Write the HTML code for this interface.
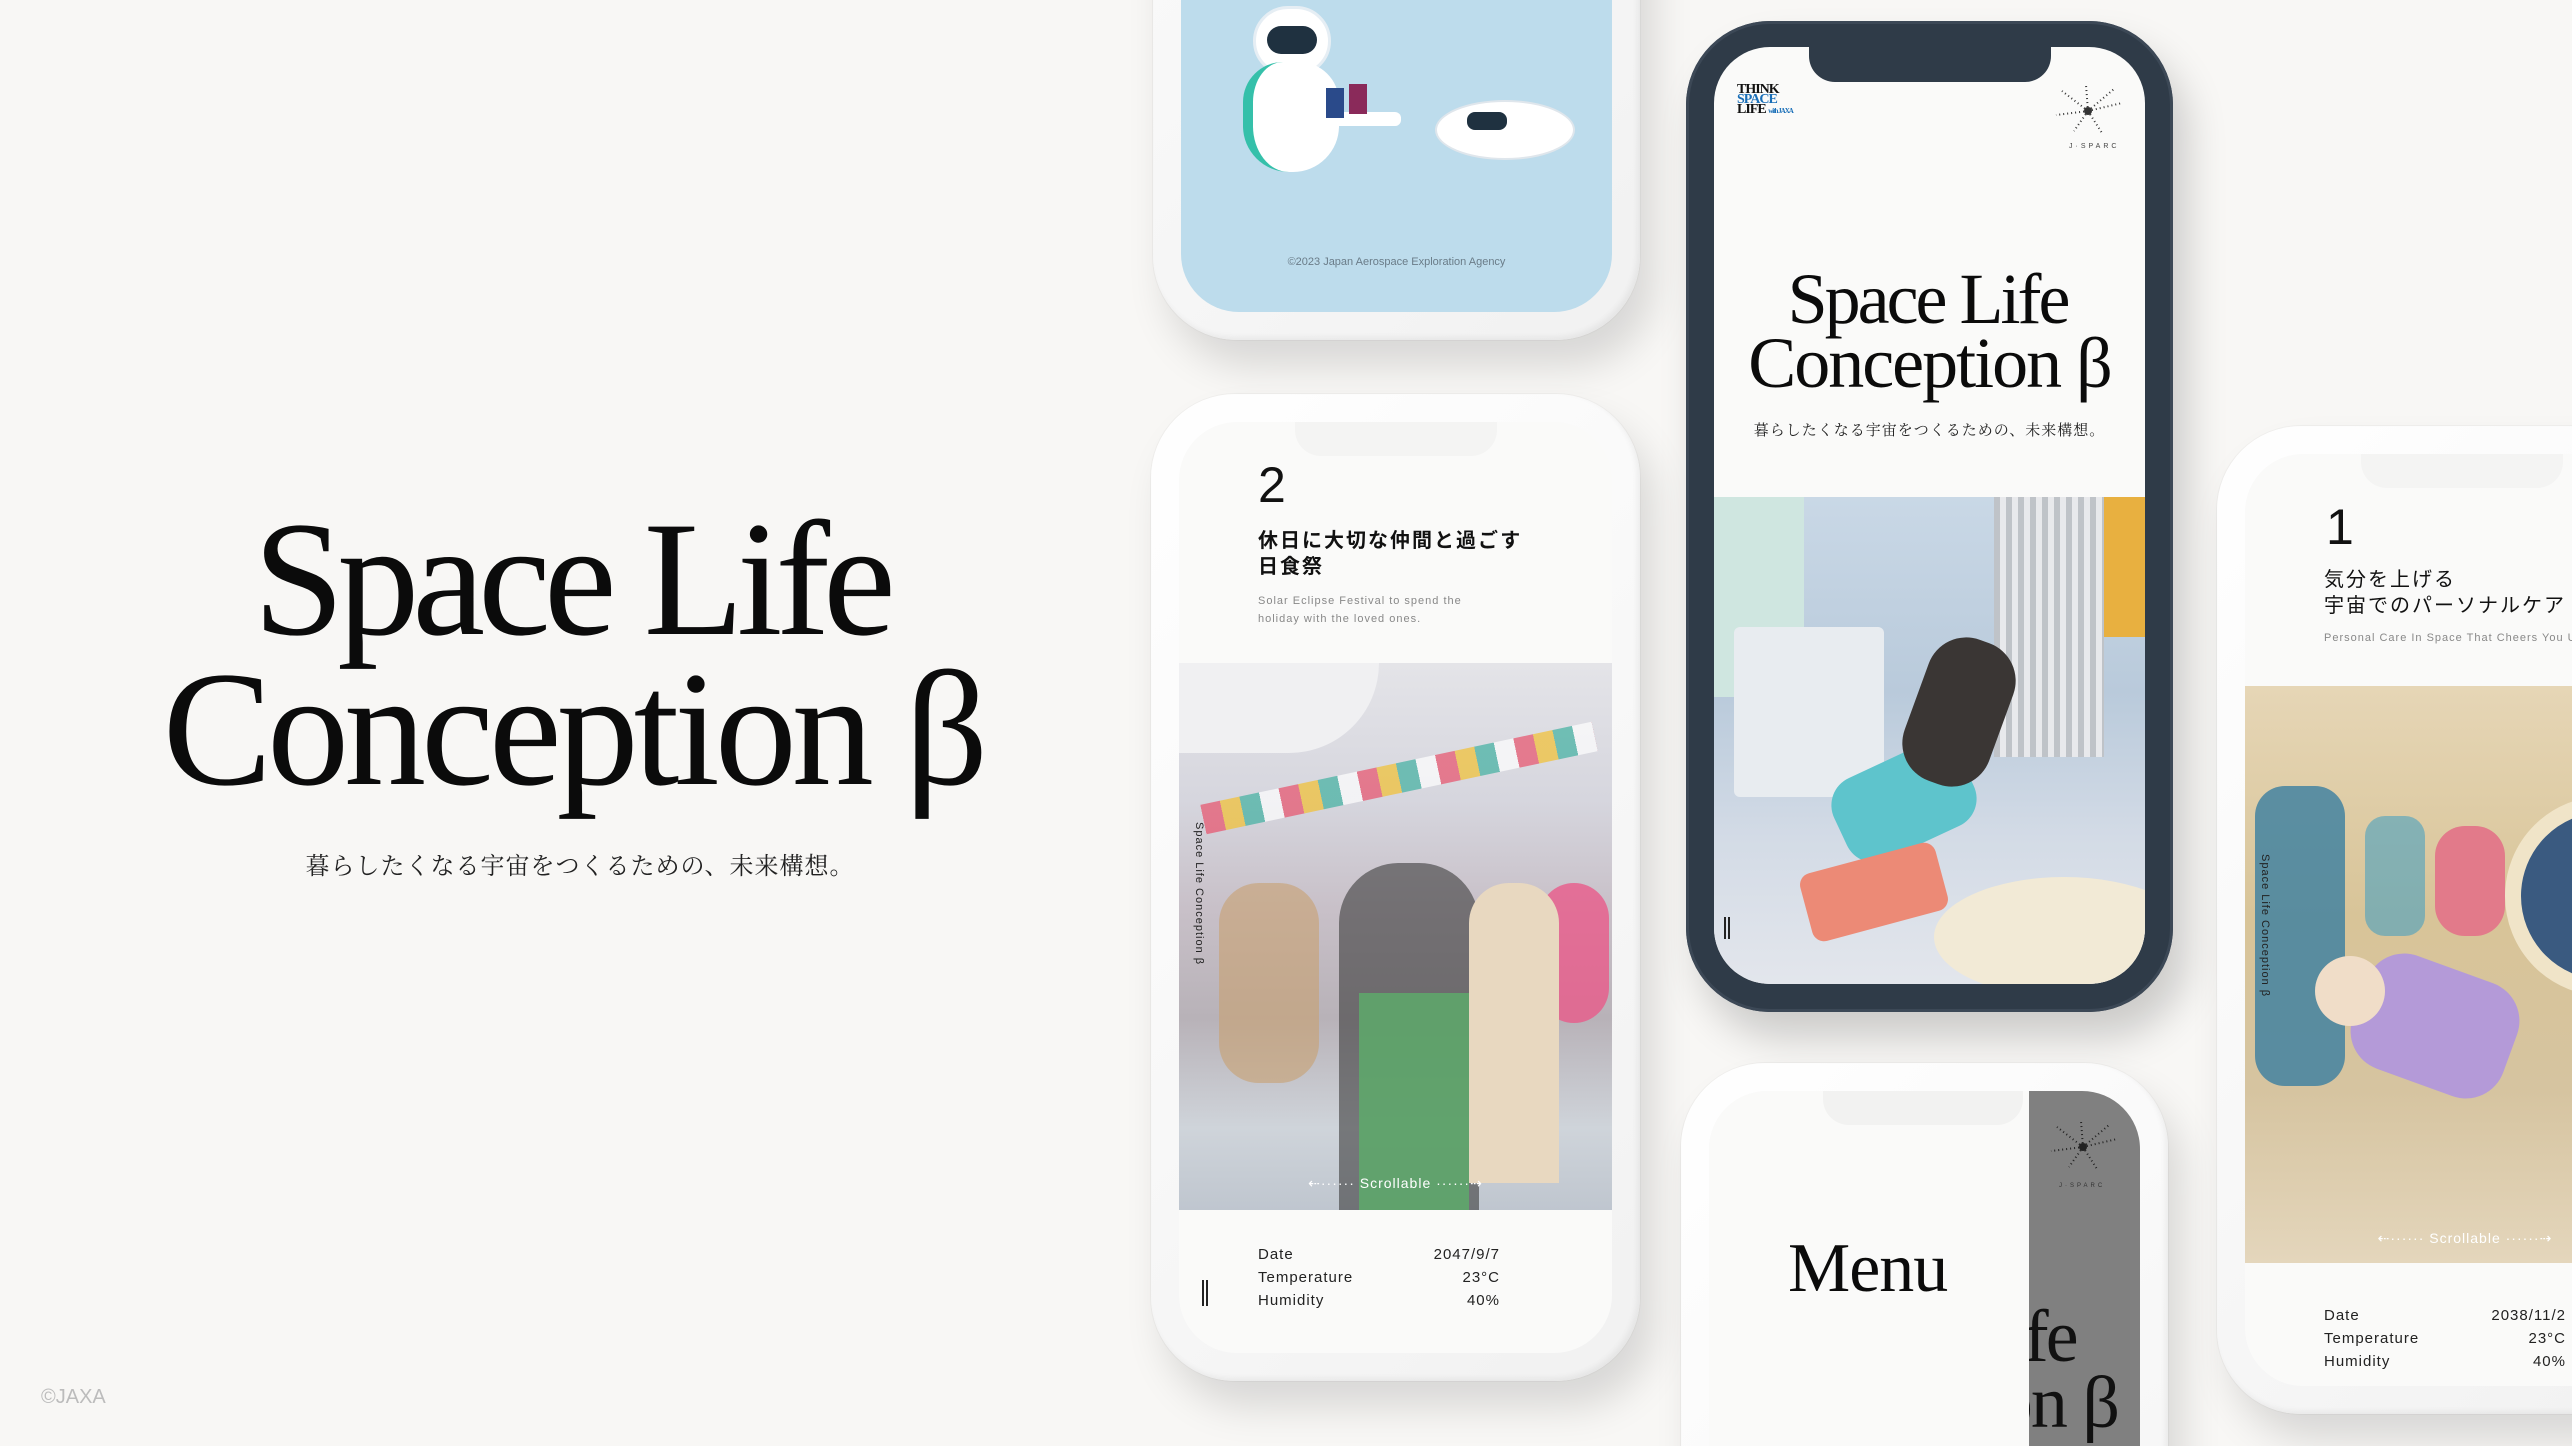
<!DOCTYPE html>
<html><head><meta charset="utf-8">
<style>
*{margin:0;padding:0;box-sizing:border-box}
html,body{width:2572px;height:1446px;overflow:hidden;background:#f8f7f5}
body{position:relative;font-family:"Liberation Sans","Noto Sans CJK JP",sans-serif;color:#111}
#wrap{position:absolute;left:0;top:0;width:2572px;height:1446px;overflow:hidden}
.serif{font-family:"Liberation Serif","Noto Serif CJK SC",serif}
.phone{position:absolute;border-radius:84px;background:linear-gradient(135deg,#ffffff,#f1f1f1);box-shadow:14px 26px 40px rgba(0,0,0,.13),0 0 0 1px rgba(0,0,0,.03),inset -3px -3px 6px rgba(0,0,0,.05)}
.phone.dark{background:#2f3b48;box-shadow:14px 26px 40px rgba(0,0,0,.18),inset 0 0 0 3px #3c4856}
.screen{position:absolute;left:28px;top:28px;right:28px;bottom:28px;border-radius:58px;overflow:hidden;background:#fafaf9}
.notch{position:absolute;top:0;height:34px;border-radius:0 0 26px 26px}
.abs{position:absolute}
.row{position:absolute;left:79px;width:242px;font-size:15px;letter-spacing:1px;color:#222}
.row span{position:absolute}
</style></head><body><div id="wrap">

<!-- left title -->
<div class="abs serif" style="left:25px;top:505px;width:1100px;text-align:center;font-size:164px;line-height:150px;color:#0b0b0b">
<div style="letter-spacing:-7px;margin-left:-8px">Space Life</div>
<div style="letter-spacing:-5px;margin-left:-4px">Conception β</div>
</div>
<div class="abs serif" style="left:0;top:846px;width:1160px;text-align:center;font-size:24px;letter-spacing:1px;color:#222">暮らしたくなる宇宙をつくるための、未来構想。</div>
<div class="abs" style="left:41px;top:1386px;font-size:20px;color:#bcbcbc">©JAXA</div>

<!-- Phone A -->
<div class="phone" style="left:1153px;top:-650px;width:487px;height:990px">
 <div class="screen" style="background:#bddcec">
  <div class="abs" style="left:0;right:0;bottom:0;height:340px">
   <div class="abs" style="left:72px;top:34px;width:78px;height:70px;border-radius:40px;background:#fff;border:3px solid #e6eef4"></div>
   <div class="abs" style="left:86px;top:54px;width:50px;height:28px;border-radius:14px;background:#1f3140"></div>
   <div class="abs" style="left:62px;top:90px;width:96px;height:110px;border-radius:40px 40px 46px 46px;background:#fff;border-left:10px solid #35c0aa"></div>
   <div class="abs" style="left:120px;top:140px;width:100px;height:14px;border-radius:6px;background:#fff"></div>
   <div class="abs" style="left:145px;top:116px;width:18px;height:30px;background:#2a4a8a"></div>
   <div class="abs" style="left:168px;top:112px;width:18px;height:30px;background:#8a2a5a"></div>
   <div class="abs" style="left:254px;top:128px;width:140px;height:60px;border-radius:50%;background:#fff;border:2px solid #dfe6ec"></div>
   <div class="abs" style="left:286px;top:140px;width:40px;height:18px;border-radius:8px;background:#1f3140"></div>
   <div class="abs" style="left:0;right:0;top:284px;text-align:center;font-size:11px;color:#6a7c88">©2023 Japan Aerospace Exploration Agency</div>
  </div>
 </div>
</div>

<!-- Phone B -->
<div class="phone" style="left:1151px;top:394px;width:489px;height:987px">
 <div class="screen">
  <div class="notch" style="left:116px;width:202px;background:#f4f4f3"></div>
  <div class="abs" style="left:79px;top:34px;font-size:50px;font-weight:500">2</div>
  <div class="abs" style="left:79px;top:106px;font-size:20px;line-height:26px;letter-spacing:2px;font-weight:bold">休日に大切な仲間と過ごす<br>日食祭</div>
  <div class="abs" style="left:79px;top:170px;font-size:11px;line-height:18px;letter-spacing:1px;color:#888">Solar Eclipse Festival to spend the<br>holiday with the loved ones.</div>
  <div class="abs" style="left:0;right:0;top:241px;height:547px;background:linear-gradient(180deg,#e4e4e8 0%,#d6d6de 25%,#c8c0c8 45%,#b8b2b8 65%,#cfd4da 85%,#bfc6cf 100%)">
   <div class="abs" style="left:0;top:0;width:200px;height:90px;border-radius:0 0 120px 0;background:#f0f0f2"></div>
   <div class="abs" style="left:20px;top:100px;width:400px;height:30px;background:repeating-linear-gradient(90deg,#e8506a 0 20px,#f2c030 20px 40px,#40b0a0 40px 60px,#fff 60px 80px);opacity:.7;transform:rotate(-12deg)"></div>
   <div class="abs" style="left:360px;top:220px;width:70px;height:140px;border-radius:35px;background:#e85a8a;opacity:.8"></div>
   <div class="abs" style="left:160px;top:200px;width:140px;height:347px;border-radius:60px 60px 0 0;background:#3a3a3a;opacity:.6"></div>
   <div class="abs" style="left:180px;top:330px;width:110px;height:217px;background:#5cae6a;opacity:.8"></div>
   <div class="abs" style="left:290px;top:220px;width:90px;height:300px;border-radius:40px 40px 0 0;background:#e8d8c0"></div>
   <div class="abs" style="left:40px;top:220px;width:100px;height:200px;border-radius:40px;background:#c8a070;opacity:.6"></div>
   <div class="abs" style="left:0;right:0;top:512px;text-align:center;font-size:14px;color:#fff;letter-spacing:1px">⇠······ Scrollable ······⇢</div>
  </div>
  <div class="abs" style="left:26px;top:400px;transform:rotate(90deg);transform-origin:0 0;font-size:11px;letter-spacing:1px;color:#222">Space Life Conception β</div>
  <div class="row" style="top:824px"><span style="left:0">Date</span><span style="right:0">2047/9/7</span></div>
  <div class="row" style="top:847px"><span style="left:0">Temperature</span><span style="right:0">23°C</span></div>
  <div class="row" style="top:870px"><span style="left:0">Humidity</span><span style="right:0">40%</span></div>
  <div class="abs" style="left:23px;top:858px;width:6px;height:26px;border-left:2px solid #222;border-right:2px solid #222"></div>
 </div>
</div>

<!-- Phone C -->
<div class="phone dark" style="left:1686px;top:21px;width:487px;height:991px">
 <div class="screen" style="left:28px;top:26px;border-radius:56px">
  <div class="notch" style="left:95px;width:242px;height:35px;background:#2f3b48"></div>
  <div class="abs" style="left:23px;top:38px;font-family:'Liberation Serif',serif;font-weight:900;font-size:14px;line-height:10px;letter-spacing:-1px;color:#111">THINK<br><span style="color:#1a6fb8">SPACE</span><br>LIFE <span style="font-size:7px;color:#1a6fb8">with JAXA</span></div>
  <svg class="abs" style="left:338px;top:34px" width="72" height="60" viewBox="0 0 72 60"><g stroke="#333" stroke-width="2" stroke-dasharray="1 3" fill="none"><path d="M36 30L10 10M36 30L62 8M36 30L4 34M36 30L70 22M36 30L22 50M36 30L50 52M36 30L34 4"/></g><circle cx="36" cy="30" r="4" fill="#333"/></svg>
  <div class="abs" style="left:355px;top:96px;font-size:7px;letter-spacing:3px;color:#444">J·SPARC</div>
  <div class="abs serif" style="left:0;right:0;top:220px;text-align:center;font-size:72px;line-height:64px;color:#0b0b0b">
   <div style="letter-spacing:-3px;margin-left:-4px">Space Life</div>
   <div style="letter-spacing:-2px">Conception β</div>
  </div>
  <div class="abs serif" style="left:0;right:0;top:372px;text-align:center;font-size:15px;letter-spacing:1px;color:#222">暮らしたくなる宇宙をつくるための、未来構想。</div>
  <div class="abs" style="left:0;right:0;top:450px;bottom:0;background:linear-gradient(180deg,#c9d8e6 0%,#b9cadb 40%,#d3dbe6 70%,#e3e6ec 100%)">
   <div class="abs" style="left:0;top:0;width:90px;height:200px;background:#cfe6e0"></div>
   <div class="abs" style="left:280px;top:0;width:110px;height:260px;background:repeating-linear-gradient(90deg,#bfc3c8 0 6px,#e8e9ec 6px 12px)"></div>
   <div class="abs" style="left:390px;top:0;width:41px;height:140px;background:#e8b040"></div>
   <div class="abs" style="left:20px;top:130px;width:150px;height:170px;background:#e8ecf0;border-radius:6px"></div>
   <div class="abs" style="left:120px;top:260px;width:140px;height:90px;background:#5ec4cc;border-radius:30px;transform:rotate(-25deg)"></div>
   <div class="abs" style="left:200px;top:140px;width:90px;height:150px;background:#3a3634;border-radius:40px;transform:rotate(20deg)"></div>
   <div class="abs" style="left:90px;top:360px;width:140px;height:70px;background:#ec8a76;border-radius:12px;transform:rotate(-15deg)"></div>
   <div class="abs" style="left:220px;top:380px;width:260px;height:120px;background:#f2ead6;border-radius:50%"></div>
   <div class="abs" style="left:10px;top:420px;width:6px;height:22px;border-left:2px solid #222;border-right:2px solid #222"></div>
  </div>
 </div>
</div>

<!-- Phone D -->
<div class="phone" style="left:1681px;top:1063px;width:487px;height:990px">
 <div class="screen">
  <div class="abs" style="left:320px;top:0;width:111px;height:600px;background:#808080;overflow:hidden;border-radius:0 40px 0 0">
   <svg class="abs" style="left:18px;top:28px" width="72" height="56" viewBox="0 0 72 56"><g stroke="#222" stroke-width="2" stroke-dasharray="1 3" fill="none"><path d="M36 28L10 8M36 28L62 6M36 28L4 32M36 28L70 20M36 28L22 48M36 28L50 50M36 28L34 2"/></g><circle cx="36" cy="28" r="4" fill="#222"/></svg>
   <div class="abs" style="left:30px;top:92px;font-size:6px;letter-spacing:3px;color:#333">J·SPARC</div>
   <div class="abs serif" style="right:22px;top:213px;text-align:center;font-size:74px;line-height:66px;color:#111;white-space:nowrap">
    <div style="letter-spacing:-3px">Space Life</div><div style="letter-spacing:-2px">Conception β</div>
   </div>
  </div>
  <div class="abs" style="left:0;top:0;width:320px;height:600px;background:#fafaf9"></div>
  <div class="notch" style="left:114px;width:200px;background:#f2f2f1"></div>
  <div class="abs serif" style="left:79px;top:138px;font-size:70px;color:#0b0b0b;letter-spacing:-1px">Menu</div>
 </div>
</div>

<!-- Phone E -->
<div class="phone" style="left:2217px;top:426px;width:489px;height:988px">
 <div class="screen">
  <div class="notch" style="left:116px;width:202px;background:#f4f4f3"></div>
  <div class="abs" style="left:81px;top:44px;font-size:50px;font-weight:500">1</div>
  <div class="abs" style="left:79px;top:113px;font-size:20px;line-height:26px;letter-spacing:2px;white-space:nowrap">気分を上げる<br>宇宙でのパーソナルケア</div>
  <div class="abs" style="left:79px;top:178px;font-size:11px;letter-spacing:1px;color:#888;white-space:nowrap">Personal Care In Space That Cheers You Up</div>
  <div class="abs" style="left:0;right:0;top:232px;height:577px;background:linear-gradient(180deg,#e6d6b6 0%,#d8c498 40%,#d6c4a0 70%,#e4d6bc 100%)">
   <div class="abs" style="left:10px;top:100px;width:90px;height:300px;border-radius:30px;background:#3a7ea0;opacity:.8"></div>
   <div class="abs" style="left:120px;top:130px;width:60px;height:120px;border-radius:20px;background:#4aa0c0;opacity:.6"></div>
   <div class="abs" style="left:260px;top:110px;width:200px;height:200px;border-radius:50%;border:16px solid #f0e4c8;background:#3a5a80"></div>
   <div class="abs" style="left:110px;top:280px;width:160px;height:120px;border-radius:40px;background:#b49ad8;transform:rotate(20deg)"></div>
   <div class="abs" style="left:190px;top:140px;width:70px;height:110px;border-radius:30px;background:#e27a8a"></div>
   <div class="abs" style="left:70px;top:270px;width:70px;height:70px;border-radius:50%;background:#f0ddc8"></div>
   <div class="abs" style="left:100px;width:240px;top:544px;text-align:center;font-size:14px;color:#fff;letter-spacing:1px">⇠······ Scrollable ······⇢</div>
  </div>
  <div class="abs" style="left:26px;top:400px;transform:rotate(90deg);transform-origin:0 0;font-size:11px;letter-spacing:1px;color:#222">Space Life Conception β</div>
  <div class="row" style="top:853px"><span style="left:0">Date</span><span style="right:0">2038/11/2</span></div>
  <div class="row" style="top:876px"><span style="left:0">Temperature</span><span style="right:0">23°C</span></div>
  <div class="row" style="top:899px"><span style="left:0">Humidity</span><span style="right:0">40%</span></div>
 </div>
</div>

</div></body></html>
